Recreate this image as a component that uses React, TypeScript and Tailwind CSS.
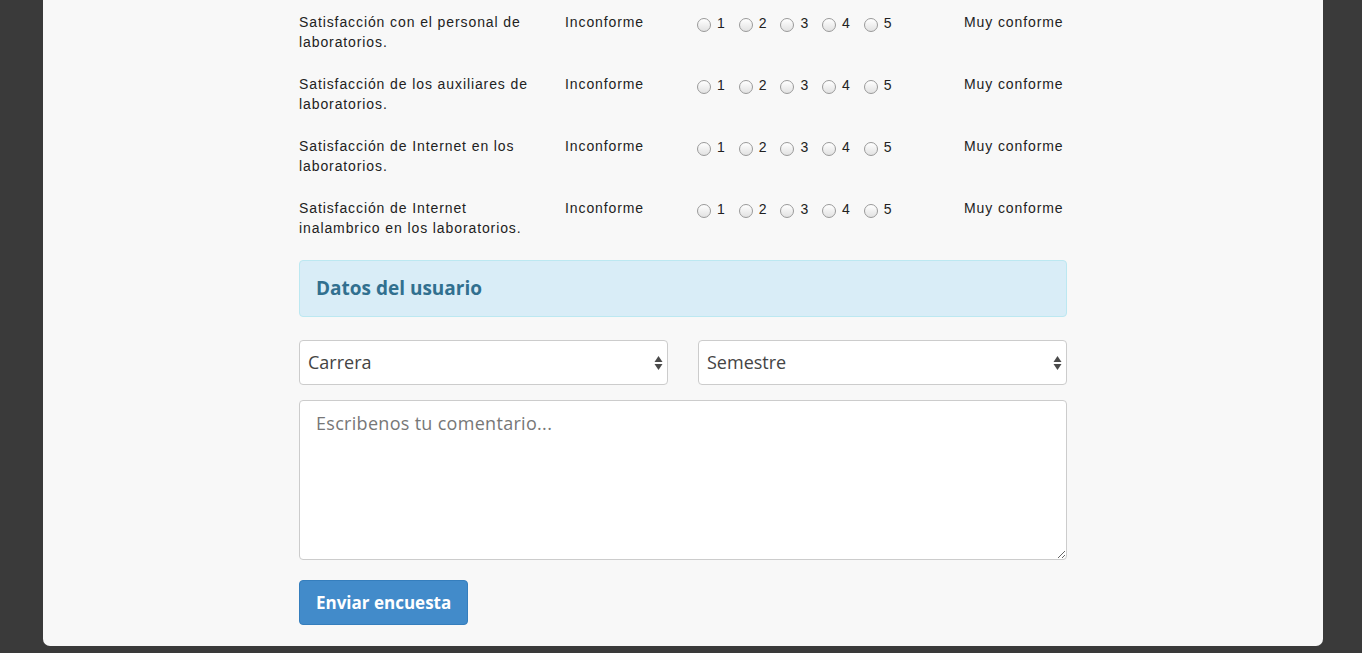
import React from 'react';

const preguntas = [
  ['Satisfacción con el personal de', 'laboratorios.'],
  ['Satisfacción de los auxiliares de', 'laboratorios.'],
  ['Satisfacción de Internet en los', 'laboratorios.'],
  ['Satisfacción de Internet', 'inalambrico en los laboratorios.'],
];

const SelectField: React.FC<{ label: string }> = ({ label }) => (
  <div className="relative flex-1">
    <select
      defaultValue=""
      className="w-full h-[45px] pl-[8px] pr-8 rounded-[4px] border border-[#cccccc] bg-white text-[18px] text-[#444444] appearance-none focus:outline-none"
      style={{ fontFamily: '"Open Sans", sans-serif' }}
    >
      <option value="">{label}</option>
    </select>
    <svg className="absolute right-[5px] top-1/2 -translate-y-1/2 pointer-events-none" width="9" height="18" viewBox="0 0 9 18">
      <path d="M4.5 2 L8.5 8 L0.5 8 Z" fill="#4a4a4a" />
      <path d="M4.5 16 L8.5 10 L0.5 10 Z" fill="#4a4a4a" />
    </svg>
  </div>
);

const App: React.FC = () => {
  return (
    <div className="h-[653px] bg-[#3a3a3a] pl-[43px] pr-[39px] pb-[7px] overflow-hidden">
      <div className="h-full bg-[#f8f8f8] rounded-b-[7px] pt-[12px]">
        <div className="w-[768px] mx-auto" style={{ fontFamily: '"Liberation Sans", Arial, sans-serif' }}>
          {/* Preguntas */}
          {preguntas.map((p, i) => (
            <div key={i} className="flex h-[40px] mb-[22px] text-[14px] leading-[20px] tracking-[0.9px] text-[#222222]">
              <div className="w-[266px]">
                {p[0]}
                <br />
                {p[1]}
              </div>
              <div className="w-[132px]">Inconforme</div>
              <div className="w-[267px] flex items-start">
                {[1, 2, 3, 4, 5].map((n) => (
                  <label key={n} className="flex items-start pt-[1px] mr-[13px]">
                    <span className="w-[14px] h-[14px] mt-[5px] rounded-full border border-[#9a9a9a] bg-gradient-to-b from-white to-[#e2e2e2] mr-[6px]" />
                    <span>{n}</span>
                  </label>
                ))}
              </div>
              <div>Muy conforme</div>
            </div>
          ))}

          {/* Datos del usuario */}
          <div className="h-[57px] border border-[#bce8f1] bg-[#d9edf7] rounded-[4px] flex items-center px-[16px]">
            <h3
              className="text-[19px] font-bold text-[#31708f]"
              style={{ fontFamily: '"Open Sans", sans-serif' }}
            >
              Datos del usuario
            </h3>
          </div>

          <div className="flex gap-[30px] mt-[23px]">
            <SelectField label="Carrera" />
            <SelectField label="Semestre" />
          </div>

          <textarea
            placeholder="Escribenos tu comentario..."
            className="block w-full h-[160px] mt-[15px] rounded-[4px] border border-[#cccccc] bg-white px-[16px] py-[9px] text-[18px] tracking-[0.3px] text-[#444444] placeholder:text-[#777777] focus:outline-none"
            style={{ fontFamily: '"Open Sans", sans-serif' }}
          />

          <button
            className="mt-[20px] h-[45px] px-[16px] rounded-[4px] bg-[#428bca] border border-[#357ebd] text-white text-[17px] font-bold"
            style={{ fontFamily: '"Open Sans", sans-serif' }}
          >
            Enviar encuesta
          </button>
        </div>
      </div>
    </div>
  );
};

export default App;
